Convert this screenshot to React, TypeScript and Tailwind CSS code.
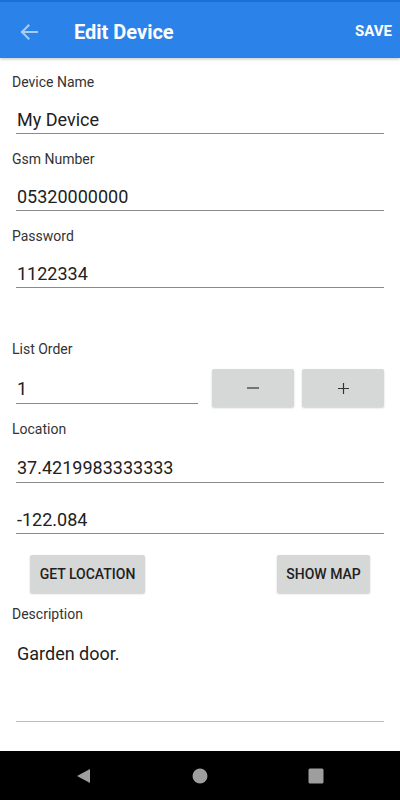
export default function App() {
  return (
    <div className="flex h-[800px] w-[400px] flex-col bg-white font-['Roboto',sans-serif] text-[#212121]">
      <header className="flex h-[58px] items-center border-t-2 border-[#1c6fd6] bg-[#2b83ea] pt-[3px] shadow-[0_1px_3px_rgba(0,0,0,0.25)]">
        <div className="flex w-[56px] justify-center pl-[1px]">
          <svg width="18" height="16" viewBox="0 0 18 16" fill="none" stroke="#a9cbf6" strokeWidth="2" strokeLinecap="square">
            <path d="M2 8h15M8.5 1.5 2 8l6.5 6.5" />
          </svg>
        </div>
        <h1 className="ml-[18px] flex-1 text-[20px] font-bold text-white">Edit Device</h1>
        <span className="mr-[8px] text-[15px] font-bold text-white">SAVE</span>
      </header>

      <main className="flex-1 px-[12px]">
        <div className="mt-[16px] text-[14px] leading-[16px] text-[#333]">Device Name</div>
        <div className="mx-[4px] border-b border-[#8a8a8a] pt-[18px] pb-[1px] pl-[1px] text-[18px] leading-[24px]">My Device</div>

        <div className="mt-[17px] text-[14px] leading-[16px] text-[#333]">Gsm Number</div>
        <div className="mx-[4px] border-b border-[#8a8a8a] pt-[18px] pb-[1px] pl-[1px] text-[18px] leading-[24px]">05320000000</div>

        <div className="mt-[17px] text-[14px] leading-[16px] text-[#333]">Password</div>
        <div className="mx-[4px] border-b border-[#8a8a8a] pt-[18px] pb-[1px] pl-[1px] text-[18px] leading-[24px]">1122334</div>

        <div className="mt-[53px] text-[14px] leading-[16px] text-[#333]">List Order</div>
        <div className="mx-[4px] flex items-start">
          <div className="w-[182px] border-b border-[#8a8a8a] pt-[20px] pb-[2px] pl-[1px] text-[18px] leading-[24px]">1</div>
          <button className="ml-[14px] mt-[12px] flex h-[38px] w-[82px] items-center justify-center rounded-[2px] bg-[#d6d7d7] shadow-[0_1px_2px_rgba(0,0,0,0.2)]">
            <svg width="12" height="12" viewBox="0 0 12 12" stroke="#333" strokeWidth="1.2"><path d="M0 6h12" /></svg>
          </button>
          <button className="ml-[8px] mt-[12px] flex h-[38px] w-[82px] items-center justify-center rounded-[2px] bg-[#d6d7d7] shadow-[0_1px_2px_rgba(0,0,0,0.2)]">
            <svg width="11" height="11" viewBox="0 0 11 11" stroke="#333" strokeWidth="1.2"><path d="M0 5.5h11M5.5 0v11" /></svg>
          </button>
        </div>

        <div className="mt-[14px] text-[14px] leading-[16px] text-[#333]">Location</div>
        <div className="mx-[4px] border-b border-[#8a8a8a] pt-[19px] pb-[2px] pl-[1px] text-[18px] leading-[24px]">37.4219983333333</div>
        <div className="mx-[4px] border-b border-[#8a8a8a] pt-[25px] pb-[1px] pl-[1px] text-[18px] leading-[24px]">-122.084</div>

        <div className="mt-[21px] flex justify-between pl-[18px] pr-[18px]">
          <button className="h-[38px] w-[115px] rounded-[2px] bg-[#d6d7d7] text-[14px] font-medium text-[#212121] shadow-[0_1px_2px_rgba(0,0,0,0.2)]">GET LOCATION</button>
          <button className="h-[38px] w-[93px] rounded-[2px] bg-[#d6d7d7] text-[14px] font-medium text-[#212121] shadow-[0_1px_2px_rgba(0,0,0,0.2)]">SHOW MAP</button>
        </div>

        <div className="mt-[13px] text-[14px] leading-[16px] text-[#333]">Description</div>
        <div className="mx-[4px] h-[100px] border-b border-[#bdbdbd] pt-[20px] pl-[1px] text-[18px] leading-[24px]">Garden door.</div>
      </main>

      <nav className="flex h-[49px] items-center justify-center gap-[100px] bg-black">
        <svg width="16" height="16" viewBox="0 0 16 16"><path d="M14 1v14L1 8z" fill="#9e9e9e" /></svg>
        <svg width="16" height="16" viewBox="0 0 16 16"><circle cx="8" cy="8" r="7.5" fill="#9e9e9e" /></svg>
        <svg width="16" height="16" viewBox="0 0 16 16"><rect x="0.5" y="0.5" width="15" height="15" rx="1.5" fill="#9e9e9e" /></svg>
      </nav>
    </div>
  );
}
